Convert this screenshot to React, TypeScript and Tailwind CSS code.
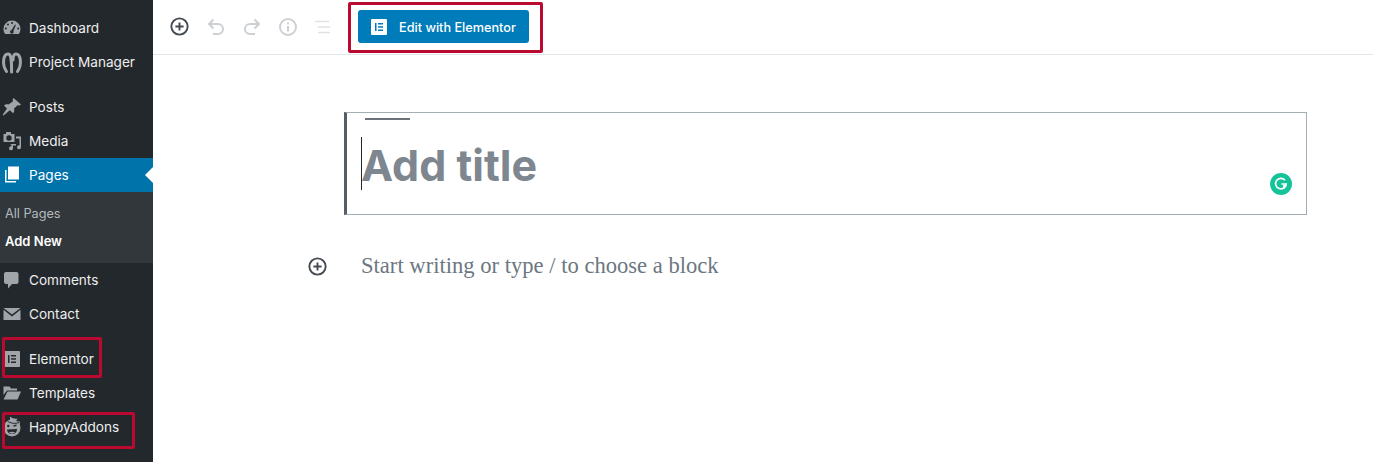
import React from "react";

const G = "#a0a5aa";

const Gauge = () => (
  <svg width="20" height="20" viewBox="0 0 20 20" fill={G}>
    <path fillRule="evenodd" d="M10 2.500a8.500 8.500 0 0 0-8.500 8.500c0 2 .6 3.700 1.700 5h13.600a8.500 8.500 0 0 0 1.700-5A8.500 8.500 0 0 0 10 2.500zM10 4a1 1 0 1 1 0 2 1 1 0 0 1 0-2zM6 5.500a1 1 0 1 1 0 2 1 1 0 0 1 0-2zM3.800 9.500a1 1 0 1 1 0 2 1 1 0 0 1 0-2zM16.200 9.500a1 1 0 1 1 0 2 1 1 0 0 1 0-2zM13 6.500l.9.500-2.500 6a1.800 1.800 0 1 1-1.700-.9z" />
  </svg>
);
const PM = () => (
  <svg width="22" height="24" viewBox="0 0 22 24" fill="none" stroke={G} strokeWidth="3">
    <path d="M5.500 21.500C.5 14 2.500 4 7 4c3.200 0 3.600 5 3.600 18" strokeLinecap="round" />
    <path d="M16.500 21.500C21.500 14 19.500 4 15 4c-2.200 0-3 3-3 6" strokeLinecap="round" />
  </svg>
);
const Pin = () => (
  <svg width="20" height="20" viewBox="0 0 20 20" fill={G}>
    <path d="M11.500 1l7.500 6.500c-.8.9-2.400 1.100-3.600.7l-3.400 3.600c.6 1.700.2 3.400-.9 4.500l-3.200-3.100L1.500 18.500l-.8-.7 4.300-6.400-3-3c1.100-1.100 2.900-1.500 4.400-.9L10.900 4.600c-.4-1.300-.2-2.700.6-3.600z" />
  </svg>
);
const MediaI = () => (
  <svg width="20" height="20" viewBox="0 0 20 20" fill={G}>
    <path fillRule="evenodd" d="M1.500 3H4V1h5v2h3.500v8H1.500zM7 4.300a2.700 2.700 0 1 0 0 5.400 2.700 2.700 0 0 0 0-5.400z" />
    <path d="M14 5.500h5v10.800a2 2 0 1 1-1.500-1.900V7.500H14zM8.500 13H14v1.500h-3v2.700a2 2 0 1 1-1.500-1.900v-1.500h-1z" />
  </svg>
);
const PagesI = () => (
  <svg width="20" height="20" viewBox="0 0 20 20" fill="#fff">
    <rect x="6" y="1.500" width="11" height="13" />
    <path d="M3 5h1.500v11H14v1.500H3z" />
  </svg>
);
const Comment = () => (
  <svg width="20" height="20" viewBox="0 0 20 20" fill={G}>
    <path d="M4 2h10.500c1.100 0 2 .9 2 2v8c0 1.100-.9 2-2 2H10l-4 4.500V14H4c-1.100 0-2-.9-2-2V4c0-1.100.9-2 2-2z" />
  </svg>
);
const Mail = () => (
  <svg width="20" height="20" viewBox="0 0 20 20" fill={G}>
    <path d="M1.500 4h17L10 10.500z" />
    <path d="M1.500 5.800V16h17V5.800L10 12.500z" />
  </svg>
);
const ElementorI = ({ bg, fg, size = 16 }: { bg: string; fg: string; size?: number }) => (
  <svg width={size} height={size} viewBox="0 0 16 16">
    <rect width="16" height="16" fill={bg} rx="1" />
    <rect x="4" y="4" width="1.500" height="8" fill={fg} />
    <rect x="7" y="4" width="5" height="1.500" fill={fg} />
    <rect x="7" y="7.200" width="5" height="1.500" fill={fg} />
    <rect x="7" y="10.500" width="5" height="1.500" fill={fg} />
  </svg>
);
const Folder = () => (
  <svg width="20" height="20" viewBox="0 0 20 20" fill={G}>
    <path d="M1.500 3.500h6L9 5.500h6V7.500H5L1.500 12z" />
    <path d="M5.500 8.500H19L15.500 16.500H1.500z" />
  </svg>
);
const Happy = () => (
  <svg width="20" height="24" viewBox="0 0 20 24">
    <circle cx="10" cy="13" r="8.500" fill={G} />
    <path d="M8 1.500c2.500 2 5 2.500 7.500 2-.5 1.500-1.500 2.500-3 3 2 .3 4 .3 5-.5l.5 3.500L8 8z" fill={G} />
    <path d="M5.500 6c3 2.500 7.500 3 11.500 1.500" stroke="#23282d" strokeWidth="1" fill="none" />
    <circle cx="6.300" cy="11" r="1.200" fill="#23282d" />
    <path d="M11.500 11l3-.7" stroke="#23282d" strokeWidth="1.400" />
    <path d="M5 14.500l10-.5c0 3-2 5-5 5s-5-2-5-4.500z" fill="#23282d" />
    <path d="M7 17.300c1.800-.8 4.300-.8 6 0-.8 1-1.800 1.400-3 1.400s-2.200-.4-3-1.400z" fill={G} />
  </svg>
);
const PlusCircle = ({ size, color }: { size: number; color: string }) => (
  <svg width={size} height={size} viewBox="0 0 24 24" fill="none" stroke={color}>
    <circle cx="12" cy="12" r="10.300" strokeWidth="2.400" />
    <path d="M12 6.800v10.400M6.800 12h10.400" strokeWidth="2.400" />
  </svg>
);

const Item = ({ icon, label, active }: { icon: React.ReactNode; label: string; active?: boolean }) => (
  <div className={`relative flex h-[34px] items-center text-[13.600px] ${active ? "bg-[#0073aa] text-white" : "text-[#eeeeee]"}`}>
    <span className="flex w-[29px] shrink-0 items-center justify-center pr-[6px]">{icon}</span>
    <span>{label}</span>
    {active && (
      <span className="absolute right-0 top-[9px] h-0 w-0 border-y-[8px] border-r-[8px] border-y-transparent border-r-white" />
    )}
  </div>
);

const Frame = ({ className }: { className: string }) => (
  <div className={`pointer-events-none absolute rounded-[2px] border-[3px] border-[#bb0a30] ${className}`} />
);

export default function App() {
  return (
    <div className="relative flex h-[462px] w-[1373px] overflow-hidden bg-white font-['Inter',sans-serif]">
      <aside className="h-full w-[153px] shrink-0 bg-[#23282d] pt-[11px]">
        <Item icon={<Gauge />} label="Dashboard" />
        <Item icon={<PM />} label="Project Manager" />
        <div className="h-[11px]" />
        <Item icon={<Pin />} label="Posts" />
        <Item icon={<MediaI />} label="Media" />
        <Item icon={<PagesI />} label="Pages" active />
        <div className="flex h-[71px] flex-col bg-[#32373c] pl-[5px] pt-[8px] text-[12.700px]">
          <div className="flex h-[28px] items-center text-[#b4b9be]">All Pages</div>
          <div className="flex h-[28px] items-center text-[13px] font-semibold text-white">Add New</div>
        </div>
        <Item icon={<Comment />} label="Comments" />
        <Item icon={<Mail />} label="Contact" />
        <div className="h-[11px]" />
        <Item icon={<ElementorI bg={G} fg="#23282d" />} label="Elementor" />
        <Item icon={<Folder />} label="Templates" />
        <Item icon={<Happy />} label="HappyAddons" />
      </aside>

      <main className="min-w-0 flex-1">
        <header className="flex h-[55px] items-center border-b border-[#e2e4e7] pb-[1px]">
          <div className="flex w-[205px] items-center gap-[18px] pl-[17px]">
            <PlusCircle size={19} color="#454b52" />
            <svg width="18" height="18" viewBox="0 0 18 18" fill="none" stroke="#ccd0d4" strokeWidth="2">
              <path d="M2 6h9a5 5 0 0 1 0 10H6" />
              <path d="M6.500 1.500 2 6l4.500 4.500" />
            </svg>
            <svg width="18" height="18" viewBox="0 0 18 18" fill="none" stroke="#ccd0d4" strokeWidth="2">
              <path d="M16 6H7a5 5 0 0 0 0 10h5" />
              <path d="M11.500 1.500 16 6l-4.500 4.500" />
            </svg>
            <svg width="18" height="18" viewBox="0 0 18 18" fill="none" stroke="#ccd0d4" strokeWidth="2">
              <circle cx="9" cy="9" r="8" />
              <path d="M9 8v5.500M9 4.500v2" />
            </svg>
            <svg width="16" height="16" viewBox="0 0 16 16" fill="none" stroke="#dfe2e4" strokeWidth="1.400">
              <path d="M0 2.500h3M3 2.500h11M3 8h2M5 8h10M3 13.500h2M5 13.500h10" />
            </svg>
          </div>
          <button className="flex h-[33px] w-[171px] items-center gap-[12px] rounded-[3px] bg-[#007cba] pl-[13px] text-[12.700px] font-medium text-white">
            <ElementorI bg="#fff" fg="#007cba" size={16} />
            <span className="pt-[2px]">Edit with Elementor</span>
          </button>
        </header>

        <div className="ml-[191px] mt-[57px] w-[963px]">
          <div className="relative h-[103px] border border-l-[3px] border-[#a2aeb2] border-l-[#555d66]">
            <div className="ml-[18px] mt-[5px] h-[2px] w-[45px] bg-[#6c7278]" />
            <div className="absolute left-[14px] top-[24px] h-[53px] w-px bg-[#23282d]" />
            <div className="ml-[14px] mt-[15px] text-[43px] font-bold leading-[60px] text-[#7e8690]">Add title</div>
            <div className="absolute left-[923px] top-[60px] flex h-[22px] w-[22px] items-center justify-center rounded-full bg-[#15c39a]">
              <svg width="14" height="14" viewBox="0 0 14 14" fill="none" stroke="#fff" strokeWidth="1.700">
                <path d="M11 3.200A5.300 5.300 0 1 0 12.200 7H7.500" />
                <path d="M10 11.500v-3h2.500" />
              </svg>
            </div>
          </div>
          <div className="relative mt-[35px] pl-[17px] font-['Liberation_Serif',serif] text-[22.600px] leading-[32px] text-[#6c7781]">
            <span className="absolute -left-[36px] top-[7px]">
              <PlusCircle size={19} color="#454b52" />
            </span>
            Start writing or type / to choose a block
          </div>
        </div>
      </main>

      <Frame className="left-[348px] top-[2px] h-[51px] w-[195px]" />
      <Frame className="left-[2px] top-[337px] h-[41px] w-[100px]" />
      <Frame className="left-[2px] top-[412px] h-[37px] w-[133px]" />
    </div>
  );
}
